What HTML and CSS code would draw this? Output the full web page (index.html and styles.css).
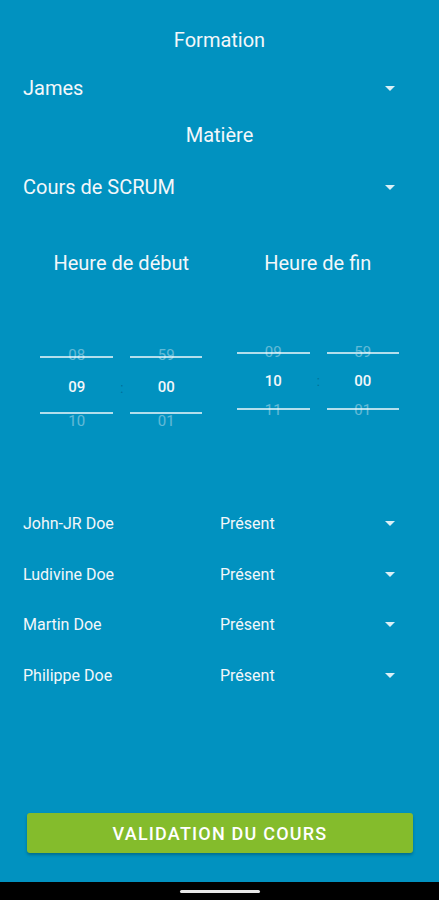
FILE: index.html
```html
<!DOCTYPE html>
<html lang="fr">
<head>
    <meta charset="UTF-8">
    <title>Saisie du cours</title>
    <link rel="stylesheet" href="styles.css">
</head>
<body>
<div class="screen">
    <main class="form">
        <h2 class="label">Formation</h2>
        <div class="select select-big">
            <span>James</span>
            <svg class="caret" width="10" height="5" viewBox="0 0 10 5"><polygon points="0,0 10,0 5,5"/></svg>
        </div>

        <h2 class="label label-matiere">Matière</h2>
        <div class="select select-big select-cours">
            <span>Cours de SCRUM</span>
            <svg class="caret" width="10" height="5" viewBox="0 0 10 5"><polygon points="0,0 10,0 5,5"/></svg>
        </div>

        <section class="times">
            <div class="time-col">
                <h3 class="time-title">Heure de début</h3>
                <div class="picker picker-start">
                    <div class="wheel">
                        <span class="faded prev">08</span>
                        <span class="current">09</span>
                        <span class="faded next">10</span>
                    </div>
                    <span class="colon">:</span>
                    <div class="wheel">
                        <span class="faded prev">59</span>
                        <span class="current">00</span>
                        <span class="faded next">01</span>
                    </div>
                </div>
            </div>
            <div class="time-col">
                <h3 class="time-title">Heure de fin</h3>
                <div class="picker picker-end">
                    <div class="wheel">
                        <span class="faded prev">09</span>
                        <span class="current">10</span>
                        <span class="faded next">11</span>
                    </div>
                    <span class="colon">:</span>
                    <div class="wheel">
                        <span class="faded prev">59</span>
                        <span class="current">00</span>
                        <span class="faded next">01</span>
                    </div>
                </div>
            </div>
        </section>

        <ul class="students">
            <li class="student">
                <span class="student-name">John-JR Doe</span>
                <div class="select select-small">
                    <span>Présent</span>
                    <svg class="caret" width="10" height="5" viewBox="0 0 10 5"><polygon points="0,0 10,0 5,5"/></svg>
                </div>
            </li>
            <li class="student">
                <span class="student-name">Ludivine Doe</span>
                <div class="select select-small">
                    <span>Présent</span>
                    <svg class="caret" width="10" height="5" viewBox="0 0 10 5"><polygon points="0,0 10,0 5,5"/></svg>
                </div>
            </li>
            <li class="student">
                <span class="student-name">Martin Doe</span>
                <div class="select select-small">
                    <span>Présent</span>
                    <svg class="caret" width="10" height="5" viewBox="0 0 10 5"><polygon points="0,0 10,0 5,5"/></svg>
                </div>
            </li>
            <li class="student">
                <span class="student-name">Philippe Doe</span>
                <div class="select select-small">
                    <span>Présent</span>
                    <svg class="caret" width="10" height="5" viewBox="0 0 10 5"><polygon points="0,0 10,0 5,5"/></svg>
                </div>
            </li>
        </ul>
    </main>

    <button class="validate">VALIDATION DU COURS</button>

    <div class="navbar"><span class="handle"></span></div>
</div>
</body>
</html>
```

FILE: styles.css
```css
* {
    box-sizing: border-box;
}

body {
    margin: 0;
    font-family: Roboto, "Noto Sans", sans-serif;
    color: #f3f7fa;
}

.screen {
    width: 439px;
    height: 900px;
    display: flex;
    flex-direction: column;
    background: #0192c0;
}

.form {
    flex: 1;
    padding: 28px 0 0 23px;
}

.label {
    margin: 0;
    padding-right: 23px;
    font-size: 20px;
    font-weight: 400;
    line-height: 24px;
    text-align: center;
}

.label-matiere {
    margin-top: 23px;
}

.select {
    display: flex;
    align-items: center;
    justify-content: space-between;
    padding-right: 44px;
}

.select-big {
    height: 24px;
    margin-top: 24px;
    font-size: 20px;
}

.select-cours {
    margin-top: 28px;
}

.caret {
    display: block;
    fill: rgba(255, 255, 255, 0.85);
}

/* heures */

.times {
    display: grid;
    grid-template-columns: 1fr 1fr;
    align-items: start;
    height: 179px;
    margin-top: 52px;
    padding-right: 23px;
}

.time-col {
    display: flex;
    flex-direction: column;
    align-items: center;
}

.time-title {
    margin: 0;
    font-size: 20px;
    font-weight: 400;
    line-height: 24px;
}

.picker {
    display: grid;
    grid-template-columns: 73px 17px 72px;
    align-items: center;
}

.picker-start {
    margin-top: 70px;
}

.picker-end {
    margin-top: 67px;
}

.wheel {
    display: flex;
    flex-direction: column;
    align-items: center;
    font-size: 15px;
    font-weight: 500;
}

.wheel span {
    line-height: 20px;
}

/* the divider lines sit on top of the half-hidden neighbours */
.current {
    position: relative;
    width: 100%;
    height: 58px;
    display: flex;
    align-items: center;
    justify-content: center;
    border-top: 2px solid rgba(255, 255, 255, 0.7);
    border-bottom: 2px solid rgba(255, 255, 255, 0.7);
}

.picker-start .current {
    padding-top: 3px;
}

.faded {
    opacity: 0.4;
    font-weight: 400;
}

.picker-start .prev {
    margin-bottom: -9px;
}

.picker-start .next {
    margin-top: -3px;
}

.picker-end .prev {
    margin-bottom: -10px;
}

.picker-end .next {
    margin-top: -10px;
}

.colon {
    text-align: center;
    font-size: 15px;
    color: rgba(0, 50, 80, 0.35);
}

/* eleves */

.students {
    list-style: none;
    margin: 68px 0 0;
    padding: 0;
}

.student {
    display: grid;
    grid-template-columns: 197px 1fr;
    align-items: center;
    height: 50.7px;
    font-size: 16px;
}

/* bouton */

.validate {
    height: 40px;
    margin: 0 26px 29px 27px;
    border: none;
    border-radius: 3px;
    background: #84bc2c;
    color: #fff;
    font-family: Roboto, "Noto Sans", sans-serif;
    font-size: 18px;
    font-weight: 500;
    letter-spacing: 1.2px;
    box-shadow: 0 2px 3px rgba(0, 0, 0, 0.25);
}

.navbar {
    height: 18px;
    display: flex;
    align-items: center;
    justify-content: center;
    background: #000;
}

.handle {
    width: 80px;
    height: 3px;
    border-radius: 2px;
    background: #e8e8e8;
}
```
